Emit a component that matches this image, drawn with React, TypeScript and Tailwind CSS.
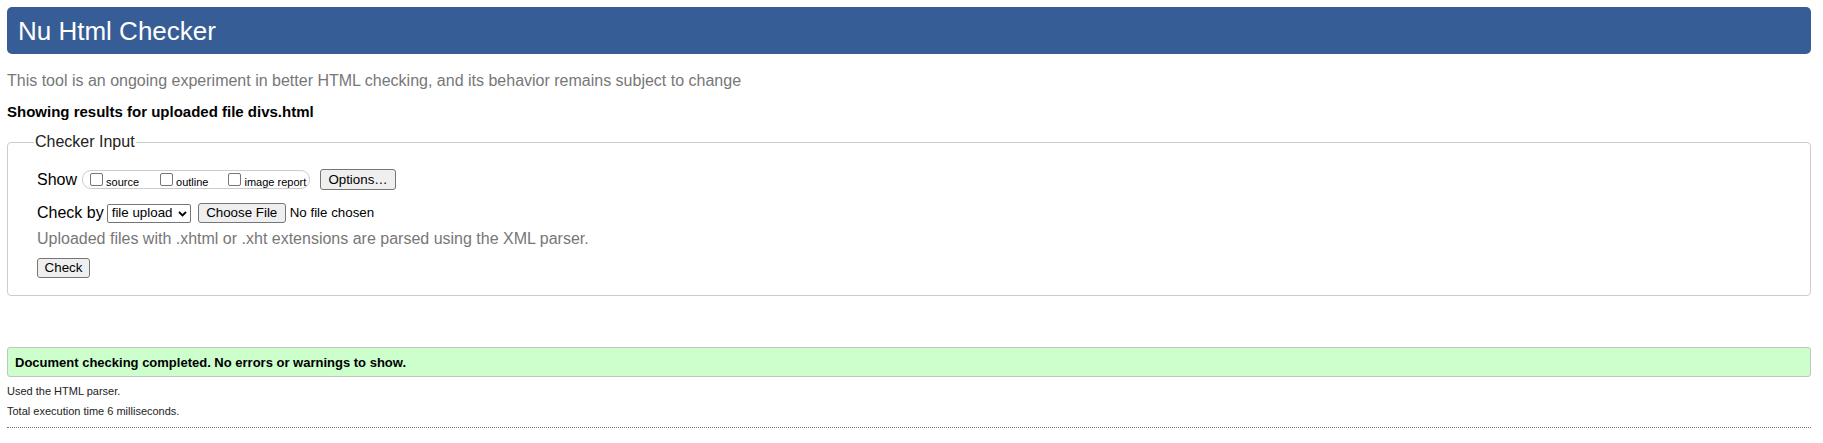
import React from "react";

function Btn({ children, className = "" }: { children: React.ReactNode; className?: string }) {
  return (
    <span
      className={
        "inline-flex items-center justify-center rounded-[3px] border border-[#767676] bg-[#efefef] px-[6px] text-[13.33px] leading-none text-black " +
        className
      }
    >
      {children}
    </span>
  );
}

function Box({ label, className = "" }: { label: string; className?: string }) {
  return (
    <label className={"flex items-end " + className}>
      <span className="inline-block h-[13px] w-[13px] rounded-[2px] border border-[#767676] bg-white" />
      <span className="mb-[-2px] ml-[3px] text-[11px] leading-none text-black">{label}</span>
    </label>
  );
}

export default function App() {
  return (
    <div className="min-h-screen bg-white pl-[7px] pr-[12px] pt-[7px] font-['Liberation_Sans',Arial,sans-serif] text-black">
      <header className="flex h-[47px] items-center rounded-[5px] bg-[#365d95] pl-[11px]">
        <h1 className="text-[26px] leading-none text-white">Nu Html Checker</h1>
      </header>

      <p className="mt-[18px] text-[16px] leading-[18px] text-[#777]">
        This tool is an ongoing experiment in better HTML checking, and its behavior remains subject to change
      </p>
      <p className="mt-[13px] text-[15px] font-bold leading-[17px]">
        Showing results for uploaded file divs.html
      </p>

      <fieldset className="mt-[13px] rounded-[4px] border border-[#ccc] pb-[17px] pl-[26px]">
        <legend className="px-[1px] text-[16px] leading-[18px] text-[#222]">Checker Input</legend>

        <div className="pl-[3px]">
          <div className="mt-[18px] flex h-[21px] items-center">
            <span className="text-[16px] leading-none">Show</span>
            <div className="ml-[5px] flex h-[19px] w-[228px] items-center rounded-[9px] border border-[#ccc] pl-[7px]">
              <Box label="source" />
              <Box label="outline" className="ml-[21px]" />
              <Box label="image report" className="ml-[20px]" />
            </div>
            <Btn className="ml-[10px] h-[21px] w-[76px]">Options…</Btn>
          </div>

          <div className="mt-[13px] flex h-[20px] items-center">
            <span className="text-[16px] leading-none">Check by</span>
            <div className="ml-[3px] flex h-[19px] w-[84px] items-center justify-between rounded-[2px] border border-[#767676] bg-white pl-[4px] pr-[3px]">
              <span className="text-[13.33px] leading-none">file upload</span>
              <svg width="9" height="6" viewBox="0 0 9 6" className="mt-[1px]">
                <path d="M1 1l3.5 3.5L8 1" fill="none" stroke="#000" strokeWidth="1.8" />
              </svg>
            </div>
            <Btn className="ml-[7px] h-[20px] w-[88px]">Choose File</Btn>
            <span className="ml-[4px] text-[13.33px] leading-none">No file chosen</span>
          </div>

          <p className="mt-[7px] text-[16px] leading-[18px] text-[#777]">
            Uploaded files with .xhtml or .xht extensions are parsed using the XML parser.
          </p>

          <div className="mt-[10px] flex">
            <Btn className="h-[20px] w-[53px]">Check</Btn>
          </div>
        </div>
      </fieldset>

      <div className="mt-[51px] flex h-[30px] items-center rounded-[3px] border border-[#c4c4c4] bg-[#ccffcc] pl-[7px]">
        <span className="text-[13px] font-bold leading-none">Document checking completed. No errors or warnings to show.</span>
      </div>

      <p className="mt-[8px] text-[11px] leading-[13px] text-[#222]">Used the HTML parser.</p>
      <p className="mt-[7px] text-[11px] leading-[13px] text-[#222]">Total execution time 6 milliseconds.</p>
      <div className="mt-[9px] border-t border-dotted border-[#777]" />
    </div>
  );
}
